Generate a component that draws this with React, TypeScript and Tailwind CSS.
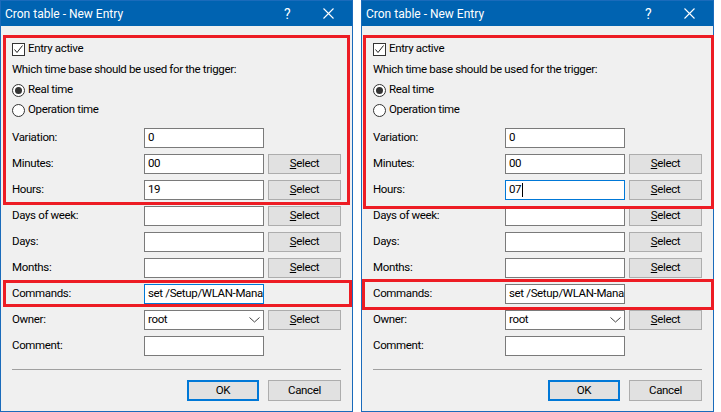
import React from 'react';

type DialogProps = {
  hours: string;
  focus: 'hours' | 'commands';
};

const font = "font-['Roboto',sans-serif]";
const bodyText = 'text-[11.5px] tracking-[-0.35px]';

const SelectButton: React.FC = () => (
  <button className={`h-5 w-[73px] border border-[#adadad] bg-[#e1e1e1] leading-none text-black ${bodyText}`}>
    <span className="underline">S</span>elect
  </button>
);

const TextBox: React.FC<{ value?: string; focused?: boolean; caret?: boolean }> = ({ value = '', focused, caret }) => (
  <div
    className={`flex h-5 w-[120px] items-center overflow-hidden whitespace-nowrap bg-white pl-[3px] text-black ${bodyText} ${
      focused ? 'border border-[#0078d7]' : 'border border-[#7a7a7a]'
    }`}
  >
    {value}
    {caret && <span className="ml-px h-[14px] w-px bg-black" />}
  </div>
);

const Row: React.FC<{ label: string; children: React.ReactNode }> = ({ label, children }) => (
  <div className="flex h-5 items-center gap-1">
    <span className="w-[128px] text-black">{label}</span>
    {children}
  </div>
);

const Dialog: React.FC<DialogProps> = ({ hours, focus }) => (
  <div className={`flex h-[412px] w-[353px] flex-col border border-[#1a6bbb] bg-[#f0f0f0] ${font}`}>
    {/* Title bar */}
    <div className="flex h-[25px] items-center bg-[#0063b1] pl-1 text-white">
      <span className="flex-1 text-[12px]">Cron table - New Entry</span>
      <span className="w-[20px] text-[14px] leading-none">?</span>
      <svg className="ml-[19px] mr-[18px]" width="11" height="11" viewBox="0 0 11 11">
        <path d="M0.5 0.5 L10.5 10.5 M10.5 0.5 L0.5 10.5" stroke="white" strokeWidth="1.1" />
      </svg>
    </div>

    {/* Body */}
    <div className={`flex flex-col pl-[11px] pt-[13px] text-black ${bodyText}`}>
      <div className="flex h-5 items-center gap-[3px]">
        <div className="flex h-[13px] w-[13px] items-center justify-center border border-[#333] bg-white">
          <svg width="11" height="11" viewBox="0 0 11 11">
            <path d="M1.5 5.5 L4 8.5 L9.5 1.5" fill="none" stroke="#222" strokeWidth="1" />
          </svg>
        </div>
        <span>Entry active</span>
      </div>
      <div className="mt-px flex h-5 items-center">Which time base should be used for the trigger:</div>
      <div className="flex h-5 items-center gap-[3px]">
        <div className="flex h-[13px] w-[13px] items-center justify-center rounded-full border border-[#333] bg-white">
          <div className="h-[7px] w-[7px] rounded-full bg-[#333]" />
        </div>
        <span>Real time</span>
      </div>
      <div className="flex h-5 items-center gap-[3px]">
        <div className="h-[13px] w-[13px] rounded-full border border-[#333] bg-white" />
        <span>Operation time</span>
      </div>

      <div className="mt-2 flex flex-col gap-[6px]">
        <Row label="Variation:">
          <TextBox value="0" />
        </Row>
        <Row label="Minutes:">
          <TextBox value="00" />
          <SelectButton />
        </Row>
        <Row label="Hours:">
          <TextBox value={hours} focused={focus === 'hours'} caret={focus === 'hours'} />
          <SelectButton />
        </Row>
        <Row label="Days of week:">
          <TextBox />
          <SelectButton />
        </Row>
        <Row label="Days:">
          <TextBox />
          <SelectButton />
        </Row>
        <Row label="Months:">
          <TextBox />
          <SelectButton />
        </Row>
        <Row label="Commands:">
          <TextBox value="set /Setup/WLAN-Management" focused={focus === 'commands'} />
        </Row>
        <Row label="Owner:">
          <div className="flex h-5 w-[120px] items-center justify-between border border-[#7a7a7a] bg-white pl-[3px] pr-[3px]">
            <span>root</span>
            <svg width="11" height="6" viewBox="0 0 11 6">
              <path d="M0.5 0.5 L5.5 5 L10.5 0.5" fill="none" stroke="#444" strokeWidth="1" />
            </svg>
          </div>
          <SelectButton />
        </Row>
        <Row label="Comment:">
          <TextBox />
        </Row>
      </div>

      <div className="mt-[13px] h-px w-[329px] bg-[#a0a0a0]" />

      <div className="mt-[10px] flex w-[329px] justify-end gap-[9px]">
        <button className="h-[21px] w-[72px] border-2 border-[#0078d7] bg-[#e1e1e1]">OK</button>
        <button className="h-[21px] w-[73px] border border-[#adadad] bg-[#e1e1e1]">Cancel</button>
      </div>
    </div>
  </div>
);

const App: React.FC = () => {
  return (
    <div className="relative h-[412px] w-[721px] overflow-hidden bg-white">
      <div className="flex gap-2">
        <Dialog hours="19" focus="commands" />
        <Dialog hours="07" focus="hours" />
      </div>

      {/* Annotation boxes */}
      <div className="pointer-events-none absolute left-[3px] top-[35px] h-[170px] w-[347px] border-[3px] border-[#ed1c24]" />
      <div className="pointer-events-none absolute left-[3px] top-[280px] h-[27px] w-[349px] border-[3px] border-[#ed1c24]" />
      <div className="pointer-events-none absolute left-[363px] top-[35px] h-[174px] w-[351px] border-[3px] border-[#ed1c24]" />
      <div className="pointer-events-none absolute left-[362px] top-[279px] h-[31px] w-[352px] border-[3px] border-[#ed1c24]" />
    </div>
  );
};

export default App;
